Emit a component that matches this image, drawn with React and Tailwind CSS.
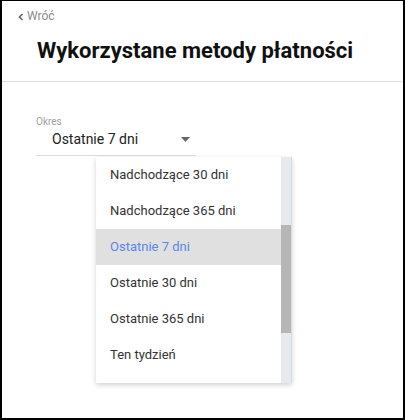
import { useState } from "react";

const options = [
  "Nadchodzące 30 dni",
  "Nadchodzące 365 dni",
  "Ostatnie 7 dni",
  "Ostatnie 30 dni",
  "Ostatnie 365 dni",
  "Ten tydzień",
];

export default function App() {
  const [selected, setSelected] = useState("Ostatnie 7 dni");

  return (
    <div className="w-[405px] h-[420px] box-border border-t border-l-2 border-r-2 border-b-2 border-black bg-white font-['Roboto',sans-serif] overflow-hidden">
      <div className="px-4 pt-[7px] h-[23px] flex items-center gap-[3px] text-[12px] leading-[16px] text-[#8a8a8a]">
        <svg width="6" height="8" viewBox="0 0 6 8" className="mt-px">
          <path d="M4.5 1 L1.5 4 L4.5 7" fill="none" stroke="#666" strokeWidth="1.6" />
        </svg>
        <span>Wróć</span>
      </div>
      <h1 className="pl-[35px] pt-[13px] pb-[16px] text-[22px] leading-[28px] font-bold text-[#111]">
        Wykorzystane metody płatności
      </h1>
      <div className="h-px bg-[#dcdcdc]" />

      <div className="pl-[34px] pt-[34px]">
        <div className="w-[160px] border-b border-[#dcdcdc]">
          <div className="text-[10px] leading-[12px] text-[#a0a0a0]">Okres</div>
          <div className="flex items-center h-[27px] pb-[4px] pl-[16px] pr-[6px] gap-2">
            <div className="flex-1 text-[14px] text-[#222]">{selected}</div>
            <svg width="9" height="5" viewBox="0 0 9 5">
              <path d="M0 0 L9 0 L4.5 5 Z" fill="#666" />
            </svg>
          </div>
        </div>
        <div className="ml-[60px] mt-px w-[196px] h-[226px] flex bg-white shadow-[0_2px_5px_rgba(0,0,0,0.18)]">
          <ul className="flex-1 pb-[9px]">
            {options.map((o) => (
              <li
                key={o}
                onClick={() => setSelected(o)}
                className={
                  "h-[36px] flex items-center pl-[14px] text-[13px] cursor-pointer " +
                  (o === selected ? "bg-[#e0e0e0] text-[#5a86ee]" : "text-[#333]")
                }
              >
                {o}
              </li>
            ))}
          </ul>
          <div className="w-[11px] bg-[#e6e9ee] flex flex-col border-r border-[#d8dbe0]">
            <div className="h-[68px]" />
            <div className="h-[108px] bg-[#b6b6b6]" />
          </div>
        </div>
      </div>
    </div>
  );
}
